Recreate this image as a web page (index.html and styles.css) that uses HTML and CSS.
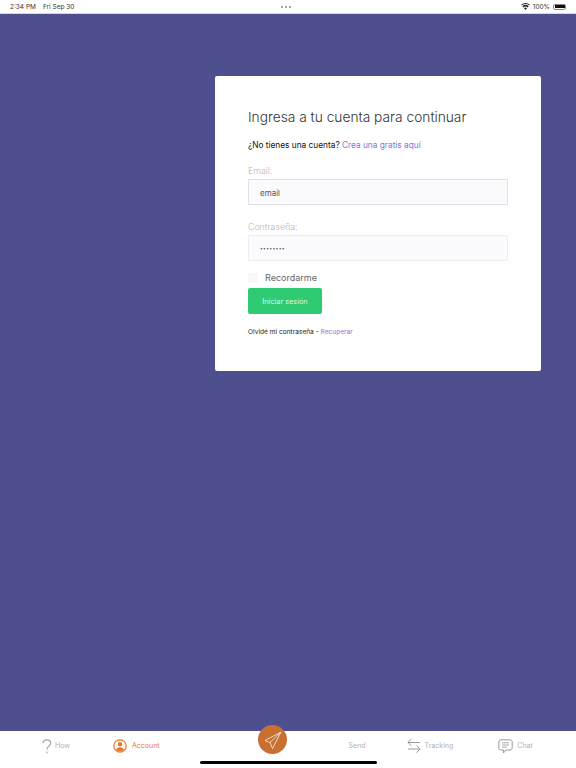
FILE: index.html
```html
<!DOCTYPE html>
<html lang="es">
<head>
  <meta charset="UTF-8">
  <meta name="viewport" content="width=device-width, initial-scale=1.0">
  <title>Ingresa</title>
  <link rel="stylesheet" href="styles.css">
</head>
<body>
  <header class="status-bar">
    <span class="status-time">2:34 PM</span>
    <span class="status-date">Fri Sep 30</span>
    <span class="status-dots"><i></i><i></i><i></i></span>
    <span class="status-right">
      <svg class="wifi" width="9" height="7" viewBox="0 0 10 8"><path d="M5 8 3.300 5.900a2.600 2.600 0 0 1 3.400 0L5 8ZM2.500 5 1.400 3.700a5.500 5.500 0 0 1 7.200 0L7.500 5a3.900 3.900 0 0 0-5 0ZM.7 2.900 0 2a7.600 7.600 0 0 1 10 0l-.7.9a6.400 6.400 0 0 0-8.600 0Z" fill="#222"/></svg>
      <span>100%</span>
      <span class="battery"><b></b></span>
    </span>
  </header>

  <main class="main-content">
    <section class="card">
      <h1>Ingresa a tu cuenta para continuar</h1>
      <p class="signup">¿No tienes una cuenta? <a href="#">Crea una gratis aquí</a></p>

      <label class="field-label">Email:</label>
      <div class="input">email</div>

      <label class="field-label field-password">Contraseña:</label>
      <div class="input input-password">••••••••</div>

      <div class="remember"><span class="checkbox"></span>Recordarme</div>
      <button class="btn-login">Iniciar sesión</button>
      <p class="forgot">Olvidé mi contraseña - <a href="#">Recuperar</a></p>
    </section>
  </main>

  <nav class="tab-bar">
    <div class="tab tab-how">
      <svg width="10" height="15" viewBox="0 0 10 15" fill="none" stroke="#a6a6a6" stroke-width="1.200"><path d="M.9 4.200C.9 2 2.600.8 4.800.8c2.300 0 4 1.300 4 3.300 0 1.500-.9 2.300-2 3.100-1.200.9-1.900 1.500-1.900 3.400"/><path d="M4.900 12.600v1.700"/></svg>
      <span>How</span>
    </div>
    <div class="tab tab-account active">
      <svg width="14" height="14" viewBox="0 0 14 14"><circle cx="7" cy="7" r="6.200" fill="none" stroke="#e8792b" stroke-width="1.200"/><circle cx="7" cy="5.300" r="2.200" fill="#e8792b"/><path d="M3.100 10.800C3.500 8.900 5 8.200 7 8.200s3.500.7 3.900 2.600A5.200 5.200 0 0 1 7 12.400a5.200 5.200 0 0 1-3.900-1.600Z" fill="#e8792b"/></svg>
      <span>Account</span>
    </div>
    <div class="tab tab-send"><span>Send</span></div>
    <div class="tab tab-tracking">
      <svg width="14" height="16" viewBox="0 0 14 16" fill="none" stroke="#999" stroke-width="1"><path d="M13 4.500H1M4.500.8.900 4.500l3.600 3.400"/><path d="M1 11h12M9.500 7.600l3.600 3.400-3.600 3.700"/></svg>
      <span>Tracking</span>
    </div>
    <div class="tab tab-chat">
      <svg width="15" height="15" viewBox="0 0 15 15" fill="none" stroke="#999" stroke-width="1"><path d="M3 .8h9c1.300 0 2.200.9 2.200 2.200v5.800c0 1.300-.9 2.200-2.200 2.200H8l-2.600 3v-3H3c-1.300 0-2.200-.9-2.200-2.200V3C.8 1.700 1.700.8 3 .8Z"/><path d="M4 3.800h7M4 6h7M4 8.200h5" stroke-width=".8"/></svg>
      <span>Chat</span>
    </div>
    <button class="send-btn">
      <svg width="18" height="20" viewBox="0 0 18 20" fill="none" stroke="#f6e3d4" stroke-width=".9" stroke-linejoin="round"><path d="M17 2 1 10.500l5 2L8.500 18.500 17 2ZM17 2 6 12.500"/></svg>
    </button>
    <div class="home-bar"></div>
  </nav>
</body>
</html>
```

FILE: styles.css
```css
body {
  font-family: Inter, "Open Sans", sans-serif;
  margin: 0;
  display: flex;
  flex-direction: column;
  height: 100vh;
  background-color: #4e4f8f;
  color: #222;
}

a {
  color: #7a78e0;
  text-decoration: none;
}

.status-bar {
  display: flex;
  align-items: center;
  height: 13px;
  padding: 0 10px;
  background-color: #fff;
  border-bottom: 1px solid #d8d8e4;
  font-size: 6.500px;
  color: #333;
}

.status-date {
  margin-left: 7px;
}

.status-dots {
  display: flex;
  gap: 2px;
  margin-left: 207px;
}

.status-dots i {
  width: 2px;
  height: 2px;
  border-radius: 50%;
  background-color: #888;
}

.status-right {
  display: flex;
  align-items: center;
  gap: 3px;
  margin-left: auto;
}

.battery {
  display: block;
  width: 13px;
  height: 6px;
  padding: 0.500px;
  border: 0.500px solid #888;
  border-radius: 2px;
  box-sizing: border-box;
}

.battery b {
  display: block;
  height: 100%;
  background-color: #111;
}

.main-content {
  flex: 1;
  padding: 62px 35px 0 215px;
}

.card {
  height: 295px;
  box-sizing: border-box;
  padding: 32px 33px 0;
  background-color: #fff;
  border-radius: 2px;
}

h1 {
  margin: 0;
  font-size: 13.750px;
  line-height: 18px;
  font-weight: 300;
  color: #333;
}

.signup {
  margin: 13px 0 0;
  font-size: 8.300px;
  line-height: 12px;
  color: #111;
}

.field-label {
  display: block;
  font-size: 8.800px;
  line-height: 12px;
  font-weight: 300;
  color: #b4b4b8;
  margin-top: 14px;
}

.field-password {
  margin-top: 16px;
}

.input {
  height: 26px;
  margin-top: 2px;
  padding-left: 11px;
  box-sizing: border-box;
  border: 1px solid #dfe0ea;
  background-color: #fbfbfe;
  font-size: 8px;
  line-height: 26px;
  color: #555;
}

.input-password {
  border-color: #ececf2;
  font-size: 5px;
  line-height: 24px;
  letter-spacing: 0.300px;
}

.remember {
  display: flex;
  align-items: center;
  gap: 7px;
  margin-top: 10px;
  font-size: 9px;
  line-height: 14px;
  color: #666;
}

.checkbox {
  width: 10px;
  height: 10px;
  background-color: #f8f8fa;
}

.btn-login {
  display: block;
  width: 74px;
  height: 26px;
  margin-top: 3px;
  padding: 0;
  border: none;
  border-radius: 2px;
  background-color: #2ecb72;
  color: #dff7e8;
  font-family: inherit;
  font-size: 7.300px;
}

.forgot {
  margin: 13px 0 0;
  font-size: 6.600px;
  line-height: 10px;
  color: #222;
}

.tab-bar {
  position: relative;
  display: flex;
  height: 37px;
  padding: 7px 0 0 42px;
  box-sizing: border-box;
  background-color: #fff;
}

.tab {
  display: flex;
  align-items: center;
  gap: 4px;
  height: 16px;
  font-size: 7px;
  line-height: 16px;
  color: #b2b2b2;
}

.tab-how {
  gap: 3px;
}

.tab-account {
  gap: 5px;
  margin-left: 43px;
}

.tab.active {
  color: #e8792b;
}

.tab-send {
  margin-left: 189px;
}

.tab-tracking {
  margin-left: 41px;
}

.tab-chat {
  margin-left: 45px;
}

.send-btn {
  position: absolute;
  left: 258px;
  top: -6px;
  width: 29px;
  height: 29px;
  padding: 0;
  border: none;
  border-radius: 50%;
  background-color: #c96f31;
  display: flex;
  align-items: center;
  justify-content: center;
}

.home-bar {
  position: absolute;
  left: 200px;
  bottom: 4px;
  width: 177px;
  height: 3px;
  border-radius: 2px;
  background-color: #000;
}
```
